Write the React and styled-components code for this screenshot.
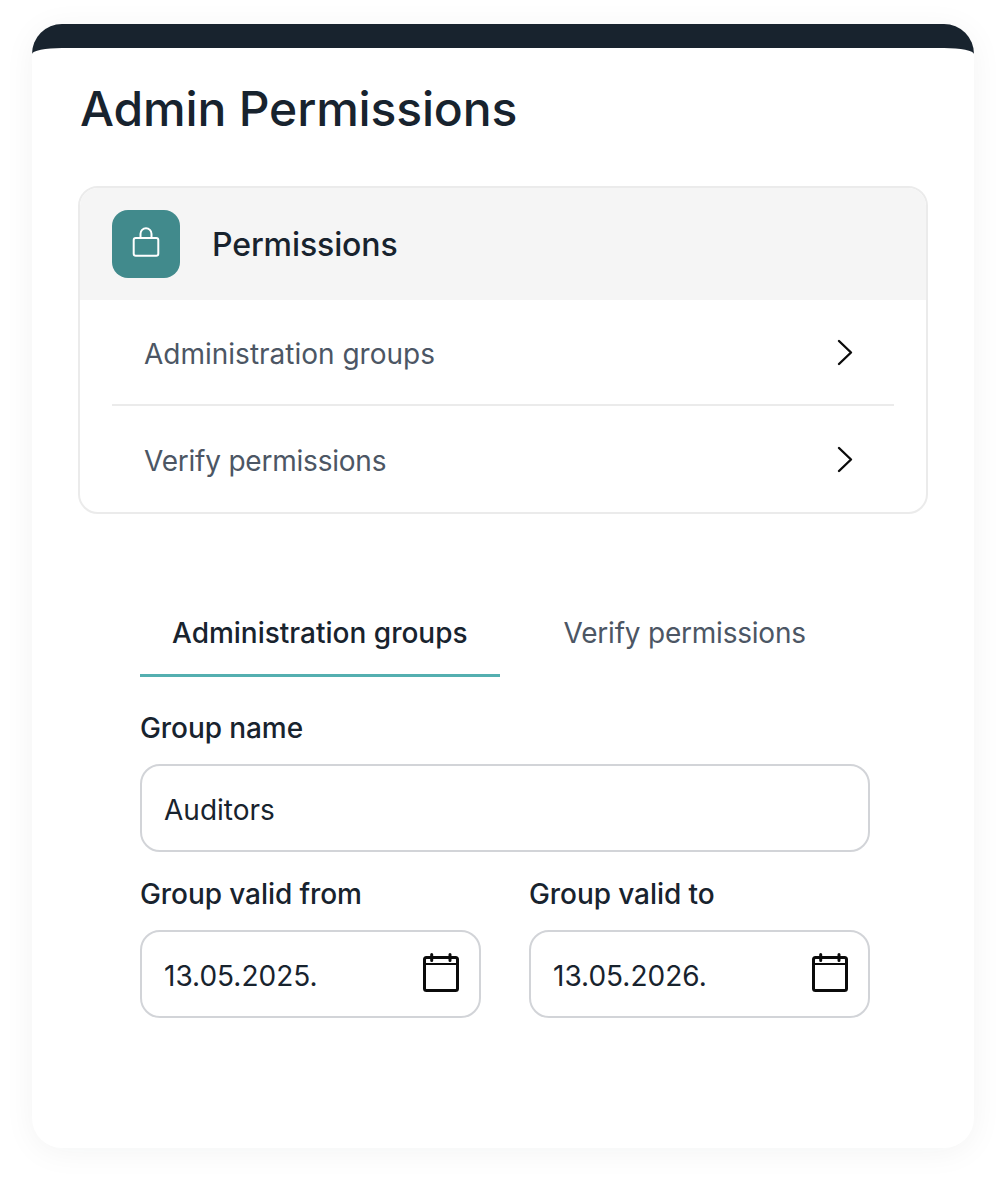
import React from "react";
import styled, { createGlobalStyle } from "styled-components";

const Global = createGlobalStyle`
  html, body { margin: 0; padding: 0; background: #fff; }
  body { font-family: Inter, "Noto Sans", sans-serif; color: #18232e; }
  * { box-sizing: border-box; }
`;

const Page = styled.div`
  width: 1006px;
  height: 1188px;
  padding: 24px 32px 40px;
`;

const Card = styled.main`
  width: 942px;
  height: 1124px;
  background: #fff;
  border-top: 24px solid #18232e;
  border-radius: 30px;
  box-shadow: 0 4px 32px rgba(20, 30, 40, 0.05);
  padding: 0 46px;
  display: flex;
  flex-direction: column;
`;

const Title = styled.h1`
  margin: 32px 0 0 2px;
  font-size: 48px;
  line-height: 58px;
  font-weight: 500;
  letter-spacing: -0.16px;
  color: #18232e;
`;

const Panel = styled.section`
  margin-top: 48px;
  width: 850px;
  height: 328px;
  border: 2px solid #ebebeb;
  border-radius: 20px;
  overflow: hidden;
`;

const PanelHeader = styled.header`
  height: 112px;
  background: #f5f5f5;
  padding-left: 32px;
  display: flex;
  align-items: center;
  gap: 32px;
`;

const IconTile = styled.div`
  width: 68px;
  height: 68px;
  border-radius: 16px;
  background: #418a8c;
  display: flex;
  align-items: center;
  justify-content: center;
`;

const PanelTitle = styled.h2`
  margin: 0;
  font-size: 32px;
  font-weight: 500;
  letter-spacing: -0.1px;
  color: #18232e;
`;

const Rows = styled.div`
  padding: 0 32px;
`;

const Row = styled.div`
  height: ${(p) => p.$h}px;
  padding: 4px 41px 0 32px;
  display: flex;
  align-items: center;
  justify-content: space-between;
  font-size: 28px;
  letter-spacing: ${(p) => (p.$tight ? "-0.22px" : "0")};
  color: #4c5664;
  border-bottom: ${(p) => (p.$divided ? "2px solid #ebebeb" : "none")};
`;

const ChevronIcon = styled.svg`
  margin-top: -3px;
`;

const Form = styled.div`
  margin: 87px 0 0 62px;
  width: 730px;
`;

const Tabs = styled.nav`
  display: flex;
  gap: 32px;
`;

const Tab = styled.div`
  height: 76px;
  padding: 0 32px 10px;
  display: flex;
  align-items: center;
  font-size: 28px;
  font-weight: ${(p) => (p.$active ? 500 : 400)};
  letter-spacing: ${(p) => (p.$active ? "0" : "-0.22px")};
  color: ${(p) => (p.$active ? "#18232e" : "#4c5664")};
  border-bottom: 3px solid ${(p) => (p.$active ? "#54afb0" : "transparent")};
`;

const Field = styled.div`
  display: flex;
  flex-direction: column;
  flex: 1;
  min-width: 0;
`;

const Label = styled.label`
  height: 34px;
  font-size: 28px;
  line-height: 34px;
  font-weight: 500;
  letter-spacing: -0.08px;
  color: #18232e;
  margin-bottom: 19px;
`;

const InputBox = styled.div`
  height: 88px;
  border: 2px solid #d2d4d8;
  border-radius: 20px;
  padding: 4px 20px 0 22px;
  display: flex;
  align-items: center;
  justify-content: space-between;
  font-size: 28px;
  color: #18232e;
`;

const CalendarIcon = styled.svg`
  margin-top: -4px;
`;

const NameField = styled(Field)`
  margin-top: 34px;
`;

const DateRow = styled.div`
  margin-top: 25px;
  display: flex;
  gap: 48px;
`;

const Lock = () => (
  <svg width="34" height="34" viewBox="0 0 34 34" fill="none" stroke="#fff" strokeWidth="2" strokeLinejoin="round">
    <rect x="4.7" y="11" width="24.6" height="17.7" rx="2" />
    <path d="M11.5 11V6.8a5.5 5.5 0 0 1 11 0V11" />
  </svg>
);

const Chevron = () => (
  <ChevronIcon width="16" height="27" viewBox="0 0 16 27" fill="none" stroke="#0b0b0b" strokeWidth="2.4" strokeLinecap="round" strokeLinejoin="round">
    <path d="M2 2 14 13.5 2 25" />
  </ChevronIcon>
);

const Calendar = () => (
  <CalendarIcon width="36" height="42" viewBox="0 0 36 42" fill="none" stroke="#0b0b0b" strokeWidth="3" strokeLinecap="round" strokeLinejoin="round">
    <rect x="1.5" y="4.5" width="33" height="33" rx="2" />
    <path d="M1.5 11h33" strokeWidth="2.2" />
    <path d="M8.7 1.5v6M27 1.5v6" />
  </CalendarIcon>
);

export default function App() {
  return (
    <>
      <Global />
      <Page>
        <Card>
          <Title>Admin Permissions</Title>
          <Panel>
            <PanelHeader>
              <IconTile><Lock /></IconTile>
              <PanelTitle>Permissions</PanelTitle>
            </PanelHeader>
            <Rows>
              <Row $h={106} $divided>Administration groups<Chevron /></Row>
              <Row $h={105} $tight>Verify permissions<Chevron /></Row>
            </Rows>
          </Panel>
          <Form>
            <Tabs>
              <Tab $active>Administration groups</Tab>
              <Tab>Verify permissions</Tab>
            </Tabs>
            <NameField>
              <Label>Group name</Label>
              <InputBox>Auditors</InputBox>
            </NameField>
            <DateRow>
              <Field>
                <Label>Group valid from</Label>
                <InputBox>13.05.2025.<Calendar /></InputBox>
              </Field>
              <Field>
                <Label>Group valid to</Label>
                <InputBox>13.05.2026.<Calendar /></InputBox>
              </Field>
            </DateRow>
          </Form>
        </Card>
      </Page>
    </>
  );
}
